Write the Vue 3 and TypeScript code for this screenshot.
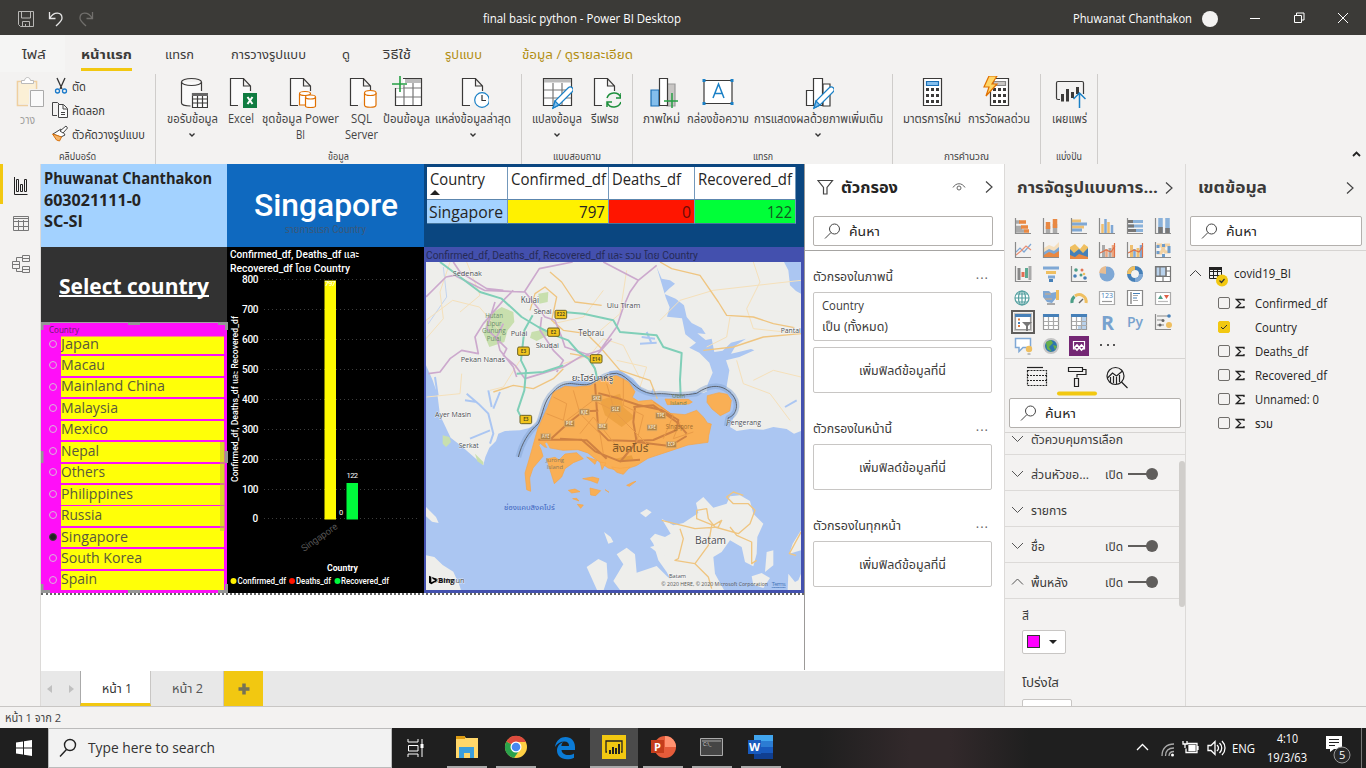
<script setup lang="ts">
import { h } from 'vue'

interface LabelProps { t: string; w: number; s?: number; b?: number; g?: number; f?: string }

const stack = '"Open Sans","Noto Sans","Noto Sans Thai","Liberation Sans",sans-serif'
const narrow = 'Roboto,"Noto Sans","Noto Sans Thai",sans-serif'

// Single line label whose advance width is fixed to w pixels.
const Tx = (p: LabelProps) => {
  const s = Number(p.s ?? 12)
  return h('svg', {
    width: p.w, height: s * 1.4,
    style: { display: 'block', flex: 'none', overflow: 'visible', marginLeft: (p.g ?? 0) + 'px' },
  }, [h('text', {
    x: 0, y: s * 1.06, textLength: p.w, lengthAdjust: 'spacingAndGlyphs', fill: 'currentColor',
    'font-size': s, 'font-weight': p.b ?? 400, 'font-family': p.f ?? stack,
  }, p.t)])
}
Tx.props = ['t', 'w', 's', 'b', 'g', 'f']

const tabs = [
  { t: 'ไฟล์', w: 24, g: 22 }, { t: 'หน้าแรก', w: 51, g: 35, on: true }, { t: 'แทรก', w: 29, g: 33 },
  { t: 'การวางรูปแบบ', w: 75, g: 37 }, { t: 'ดู', w: 8, g: 36 }, { t: 'วิธีใช้', w: 28, g: 33 },
  { t: 'รูปแบบ', w: 37, g: 34, gold: true }, { t: 'ข้อมูล / ดูรายละเอียด', w: 111, g: 40, gold: true },
]

interface Btn { icon: string; w: number; l: [string, number][]; drop?: boolean }
const groups: { w: number; pad: number; label: string; lw: number; items: Btn[] }[] = [
  { w: 366, pad: 6, label: 'ข้อมูล', lw: 21, items: [
    { icon: 'db', w: 60, l: [['ขอรับข้อมูล', 51]], drop: true },
    { icon: 'excel', w: 38, l: [['Excel', 26]] },
    { icon: 'dataset', w: 81, l: [['ชุดข้อมูล Power', 77], ['BI', 9]] },
    { icon: 'sql', w: 40, l: [['SQL', 21], ['Server', 33]] },
    { icon: 'enter', w: 51, l: [['ป้อนข้อมูล', 47]] },
    { icon: 'recent', w: 82, l: [['แหล่งข้อมูลล่าสุด', 76]], drop: true },
  ] },
  { w: 111, pad: 7, label: 'แบบสอบถาม', lw: 48, items: [
    { icon: 'transform', w: 56, l: [['แปลงข้อมูล', 50]], drop: true },
    { icon: 'refresh', w: 39, l: [['รีเฟรช', 28]] },
  ] },
  { w: 260, pad: 8, label: 'แทรก', lw: 20, items: [
    { icon: 'visual', w: 41, l: [['ภาพใหม่', 37]] },
    { icon: 'textbox', w: 71, l: [['กล่องข้อความ', 62]] },
    { icon: 'more', w: 130, l: [['การแสดงผลด้วยภาพเพิ่มเติม', 129]], drop: true },
  ] },
  { w: 148, pad: 8, label: 'การคำนวณ', lw: 45, items: [
    { icon: 'calc', w: 62, l: [['มาตรการใหม่', 58]] },
    { icon: 'quick', w: 71, l: [['การวัดผลด่วน', 62]] },
  ] },
  { w: 57, pad: 7, label: 'แบ่งปัน', lw: 26, items: [{ icon: 'publish', w: 43, l: [['เผยแพร่', 35]] }] },
]

const countries: [string, number][] = [
  ['Japan', 38], ['Macau', 44], ['Mainland China', 104], ['Malaysia', 57], ['Mexico', 47], ['Nepal', 38],
  ['Others', 44], ['Philippines', 72], ['Russia', 41], ['Singapore', 67], ['South Korea', 81], ['Spain', 36],
]
const ticks = [800, 700, 600, 500, 400, 300, 200, 100, 0]
const columns = [
  { t: 'Country', w: 55, v: 'Singapore', vw: 74 }, { t: 'Confirmed_df', w: 95, v: '797', vw: 26 },
  { t: 'Deaths_df', w: 69, v: '0', vw: 9 }, { t: 'Recovered_df', w: 94, v: '122', vw: 25 },
]
const filters = [
  { t: 'ตัวกรองในภาพนี้', w: 80, card: true }, { t: 'ตัวกรองในหน้านี้', w: 79, card: false },
  { t: 'ตัวกรองในทุกหน้า', w: 88, card: false },
]
const vizIcons = [
  'hbarStack', 'vbarStack', 'hbar', 'vbar', 'hbar100', 'vbar100',
  'line', 'area', 'areaStack', 'combo', 'combo2', 'ribbon',
  'waterfall', 'funnel', 'scatter', 'pie', 'donut', 'treemap',
  'globe', 'filled', 'gauge', 'card', 'multi', 'kpi',
  'slicer', 'table', 'matrix', 'R', 'Py', 'influence',
  'qa', 'arcgis', 'apps', 'dots',
]
const sections: { t: string; w: number; on: boolean; up?: boolean }[] = [
  { t: 'ส่วนหัวขอ...', w: 58, on: true }, { t: 'รายการ', w: 36, on: false },
  { t: 'ชื่อ', w: 14, on: true }, { t: 'พื้นหลัง', w: 37, on: true, up: true },
]
const fields: { t: string; w: number; on?: boolean }[] = [
  { t: 'Confirmed_df', w: 72 }, { t: 'Country', w: 42, on: true }, { t: 'Deaths_df', w: 53 },
  { t: 'Recovered_df', w: 72 }, { t: 'Unnamed: 0', w: 64 }, { t: 'รวม', w: 18 },
]
const places: { t: string; x: number; y: number; w: number; s: number; c?: string }[] = [
  { t: 'Sedenak', x: 98, y: 347, w: 88, s: 22 }, { t: 'Kulai', x: 302, y: 429, w: 55, s: 26 },
  { t: 'Senai', x: 341, y: 462, w: 54, s: 22 }, { t: 'Ulu Tiram', x: 560, y: 443, w: 101, s: 22 },
  { t: 'Hutan', x: 196, y: 474, w: 53, s: 19, c: '#6b8c6b' }, { t: 'Lipur', x: 200, y: 496, w: 45, s: 19, c: '#6b8c6b' },
  { t: 'Gunung', x: 186, y: 519, w: 71, s: 19, c: '#6b8c6b' }, { t: 'Pulai', x: 200, y: 541, w: 43, s: 19, c: '#6b8c6b' },
  { t: 'Pulai', x: 272, y: 527, w: 50, s: 22 }, { t: 'Tebrau', x: 475, y: 526, w: 77, s: 25 },
  { t: 'Skudai', x: 347, y: 562, w: 70, s: 22 }, { t: 'Pantai', x: 1082, y: 519, w: 60, s: 20 },
  { t: 'Pekan Nanas', x: 122, y: 605, w: 133, s: 22 }, { t: 'ยะโฮร์บาห์รู', x: 455, y: 662, w: 125, s: 24 },
  { t: 'Ayer Masin', x: 45, y: 770, w: 108, s: 22 }, { t: 'Serkat', x: 116, y: 863, w: 60, s: 22 },
  { t: 'Ubin', x: 756, y: 713, w: 40, s: 18, c: '#71824d' }, { t: 'Island', x: 750, y: 733, w: 50, s: 18, c: '#71824d' },
  { t: 'Pengerang', x: 920, y: 793, w: 103, s: 22 }, { t: 'Singapore', x: 737, y: 807, w: 82, s: 19, c: '#a36e30' },
  { t: 'สิงคโปร์', x: 577, y: 876, w: 108, s: 31, c: '#7b5528' },
  { t: 'Jurong', x: 378, y: 906, w: 54, s: 18, c: '#8e7a5a' }, { t: 'Island', x: 380, y: 926, w: 49, s: 18, c: '#8e7a5a' },
  { t: 'ช่องแคบสิงคโปร์', x: 252, y: 1050, w: 152, s: 22, c: '#3d63bd' },
  { t: 'Batam', x: 825, y: 1152, w: 93, s: 34 }, { t: 'Batam', x: 747, y: 1252, w: 51, s: 17 },
  { t: 'Karimun', x: 44, y: 1267, w: 90, s: 24 },
]
const shields: { t: string; x: number; y: number }[] = [
  { t: 'E22', x: 422, y: 462 }, { t: 'E2', x: 400, y: 515 }, { t: 'E3', x: 310, y: 572 }, { t: 'E14', x: 528, y: 595 },
  { t: 'E3', x: 317, y: 777 },
]
const roads: { t: string; x: number; y: number }[] = [
  { t: 'SKE', x: 530, y: 713 }, { t: 'KJE', x: 493, y: 755 }, { t: 'SLE', x: 587, y: 746 }, { t: 'PIE', x: 448, y: 790 },
  { t: 'BKE', x: 547, y: 799 }, { t: 'AYE', x: 377, y: 829 }, { t: 'TPE', x: 722, y: 766 }, { t: 'KPE', x: 696, y: 802 },
  { t: 'ECP', x: 754, y: 853 },
]
</script>

<template>
  <div class="app">
    <header class="title">
      <svg class="tools" width="100" height="35" fill="none">
        <g stroke="#b8b7b5"><path d="M18.500 10.500h15v15h-13l-2-2zM21.500 11v6h9v-6M22.500 25.500v-5h7v5M25.500 23v2" /></g>
        <path d="M49.500 11v6.500h6M50 17c4-7 12-6 12 0 0 3-3 5-6 8" stroke="#e6e6e6" stroke-width="1.300" />
        <path d="M92.500 11v6.500h-6M92 17c-4-7-12-6-12 0 0 3 3 5 6 8" stroke="#716f6c" stroke-width="1.300" />
      </svg>
      <Tx t="final basic python - Power BI Desktop" :w="198" :g="383" />
      <Tx t="Phuwanat Chanthakon" :w="119" :g="392" />
      <i class="avatar" />
      <svg width="148" height="35" fill="none" stroke="#fff"><path d="M32 17.500h10M76.500 14.500h7v7h-7zM78.500 14v-2h7.500v7h-2M120 12l10 10M130 12l-10 10" /></svg>
    </header>

    <nav class="tabs">
      <div v-for="t in tabs" :key="t.t" class="tab" :class="{ on: t.on, gold: t.gold }">
        <Tx :t="t.t" :w="t.w" :s="13" :b="t.on ? 700 : 400" :g="t.g" />
        <i v-if="t.on" class="bar" />
      </div>
    </nav>

    <section class="ribbon">
      <div class="group clip">
        <div class="clipbody">
          <div class="paste">
            <svg width="32" height="33" fill="none"><path d="M4 7h16v6h-6v15H4z" fill="#fbf0d6" /><path d="M9 5.500H2.500v24H13" stroke="#efcf9f" stroke-width="1.600" /><path d="M19 5.500h2.500V13" stroke="#efcf9f" stroke-width="1.600" /><path d="M6.500 7.500v-3h3c.5-4 5.500-4 6 0h3v3z" fill="#fff" stroke="#bbb" /><path d="M15.500 14.500h13v16h-13z" fill="#fafafa" stroke="#aaa" /></svg>
            <Tx t="วาง" :w="15" />
          </div>
          <div class="cmds">
            <div class="cmd">
              <svg width="18" height="18" fill="none"><path d="M5 1l5 11M13 1L8 12" stroke="#333" stroke-width="1.300" /><circle cx="5.500" cy="14" r="2" stroke="#1979ca" stroke-width="1.300" /><circle cx="12.500" cy="14" r="2" stroke="#1979ca" stroke-width="1.300" /></svg>
              <Tx t="ตัด" :w="14" :g="2" />
            </div>
            <div class="cmd">
              <svg width="18" height="18" fill="#fafafa" stroke="#444"><path d="M5 14.500H.5v-13h5l2 2" fill="none" /><path d="M6.500 3.500h5l4 4v9h-9zM11 4v4h4M9 11.500h4M9 13.500h4" /></svg>
              <Tx t="คัดลอก" :w="33" :g="2" />
            </div>
            <div class="cmd">
              <svg width="18" height="18" fill="none"><path d="M1 9l8-5 4 6-4 2z" fill="#fff" stroke="#444" /><path d="M.5 9l9 3-2 4-3-1z" fill="#f6b56a" stroke="#d9730d" /><path d="M8 6l6-5 1.500 2L11 8z" fill="#fff" stroke="#444" /></svg>
              <Tx t="ตัวคัดวางรูปแบบ" :w="73" :g="2" />
            </div>
          </div>
        </div>
        <div class="glabel"><Tx t="คลิปบอร์ด" :w="37" :s="10.500" /></div>
      </div>
      <div v-for="g in groups" :key="g.label" class="group" :style="{ width: g.w + 'px' }">
        <div class="btns" :style="{ paddingLeft: g.pad + 'px' }">
          <div v-for="b in g.items" :key="b.icon" class="btn" :style="{ width: b.w + 'px' }">
            <svg width="32" height="34" fill="none" stroke="#3b3a39" stroke-width="1.200">
              <template v-if="['excel', 'dataset', 'sql', 'recent', 'refresh'].includes(b.icon)">
                <path d="M13 29.500H5.500v-27h13l7 7.500V15M18.500 2.500V10h7" fill="#fafafa" />
              </template>
              <g v-if="b.icon === 'db'"><path d="M5.500 6h20v10h-9v13c-5 1-11 0-11-2z" fill="#fafafa" stroke="none" /><path d="M5.500 6v21c0 2 5 3 9 3M25.500 6v9" /><ellipse cx="15.500" cy="6" rx="10" ry="3.500" /><path d="M16.500 17.500h15v14h-15zM16.500 23h15M16.500 27h15M21.500 20v11M26.500 20v11" fill="#fff" /><path d="M16 17h16v3H16z" fill="#666" stroke="none" /></g>
              <g v-if="b.icon === 'excel'"><path d="M18 17h14v15H18z" fill="#107c41" stroke="none" /><path d="M22.500 21l5 7M27.500 21l-5 7" stroke="#fff" stroke-width="2" /></g>
              <g v-if="b.icon === 'dataset'" stroke="#e07000" fill="#fff"><path d="M14.500 18v11h8V18" /><ellipse cx="20" cy="17.500" rx="5.500" ry="2" /><path d="M20.500 21v9c0 2 10 2 10 0v-9" /><ellipse cx="25.500" cy="21" rx="5" ry="2" /></g>
              <g v-if="b.icon === 'sql'" stroke="#e07000" fill="#fff"><path d="M19.500 17v12c0 3 11.500 3 11.500 0V17" /><ellipse cx="25.300" cy="17" rx="5.800" ry="2.500" /></g>
              <g v-if="b.icon === 'enter'"><path d="M4.500 2.500h26v27h-26z" fill="#fff" /><path d="M14 3h16v4H14z" fill="#bbb" stroke="none" /><path d="M5 12h25M5 21h25M13 9v20M22 7v22" stroke="#777" /><path d="M1 1h11v11H1z" fill="#f3f2f1" stroke="none" /><path d="M9 0v16M1 8h15" stroke="#26a044" stroke-width="1.600" /></g>
              <g v-if="b.icon === 'recent'" stroke="#1a80c6"><circle cx="25" cy="24" r="7.300" fill="#fff" /><path d="M25 19v5.500h4" stroke="#333" /></g>
              <g v-if="b.icon === 'transform'"><path d="M2.500 2.500h28v27h-28z" fill="#fff" /><path d="M3 3h27v3.500H3z" fill="#bbb" stroke="none" /><path d="M3 14h27M3 22h27M12 7v22M21 7v22" stroke="#777" /></g>
              <g v-if="b.icon === 'refresh'" stroke="#1d8f3c" stroke-width="1.500"><circle cx="25" cy="24" r="8" fill="#f3f2f1" stroke="none" /><path d="M18 22c2-6 11-7 13.500-1M32 17v5h-5M32 26c-2 6-11 7-13.500 1M18 31v-5h5" /></g>
              <g v-if="b.icon === 'visual'"><path d="M5 14h8v16H5z" fill="#83beec" stroke="#1a6fb5" /><path d="M21 8h8v22h-8z" fill="#c8c6c4" stroke="#999" /><path d="M13.500 2.500h8v27h-8z" fill="#fff" /><path d="M26 17v15M18 25h15" stroke="#26a044" stroke-width="1.500" /></g>
              <g v-if="b.icon === 'textbox'"><path d="M2 4.500h28v23H2z" fill="#fff" /><path d="M11 22l5.500-14L22 22M13 17.500h7" stroke="#1a80c6" stroke-width="1.500" /><g fill="#1a80c6" stroke="none"><path d="M.5 3h3v3h-3zM28.500 3h3v3h-3zM.5 26h3v3h-3zM28.500 26h3v3h-3z" /></g></g>
              <g v-if="b.icon === 'more'" fill="#fff"><path d="M4.500 14.500h7v15h-7zM21 8h7v22h-7zM11.500 2.500h9v27h-9z" /></g>
              <g v-if="b.icon === 'transform' || b.icon === 'more'" stroke="#1a80c6"><path d="M12 32l2-7 13-13c3-3 7 1 4 4L18 29z" fill="#fff" /><path d="M12 32l2-7 4 4z" fill="#83beec" /></g>
              <g v-if="b.icon === 'calc' || b.icon === 'quick'"><path d="M7.500 2.500h18v27h-18z" fill="#fff" /><path d="M10.500 5.500h12v4h-12z" :fill="b.icon === 'calc' ? '#83beec' : '#c8c6c4'" :stroke="b.icon === 'calc' ? '#1a6fb5' : '#888'" /><path d="M10 13.500h13M10 19.500h13M10 25.500h13" stroke-width="3" stroke-dasharray="3 2" /></g>
              <path v-if="b.icon === 'quick'" d="M6 0h8L9 8h5L3 20l3-9H1z" fill="#ffd667" stroke="#e07000" />
              <g v-if="b.icon === 'publish'"><path d="M6 23.500H4c-1 0-1.500-.5-1.500-1.500V7c0-1 .5-1.500 1.500-1.500h24c1 0 1.500.5 1.500 1.500v11" /><path d="M8.500 18v7.500M13.500 13v12.500M18.500 16v6M23.500 11v7" stroke-width="3" /><path d="M25.500 32V17M19.500 23l6-6 6 6" stroke="#1a80c6" stroke-width="1.500" /></g>
            </svg>
            <div v-for="l in b.l" :key="l[0]" class="line"><Tx :t="l[0]" :w="l[1]" :s="12" /></div>
            <svg v-if="b.drop" class="drop" width="8" height="16" fill="none" stroke="#333" stroke-width="1.400"><path d="M1.500 7.500L4 10l2.500-2.500" /></svg>
          </div>
        </div>
        <div class="glabel"><Tx :t="g.label" :w="g.lw" :s="10.500" /></div>
      </div>
      <svg class="collapse" width="12" height="10" fill="none" stroke="#222" stroke-width="1.800"><path d="M2 7l3.500-3.500L9 7" /></svg>
    </section>

    <main class="work">
      <aside class="side">
        <i class="mark" />
        <svg width="40" height="130" fill="none">
          <path d="M14.500 13v17.500h13M16.500 15.500h2v12h-2zM20.500 20.500h2v7h-2zM24.500 15.500h2v12h-2z" stroke="#222" />
          <path d="M13.500 52.500h15v14h-15zM13.500 57.500h15M13.500 62.500h15M18.500 56v10M23.500 56v10M14 54.500h14" stroke="#777" />
          <path d="M22.500 91.500h7v6h-7zM22.500 102.500h7v6h-7zM12.500 97.500h7v7h-7zM12.500 100.500h7M22.500 94.500h7M22.500 105.500h7M16.500 97v-3.500h6M16.500 105v2.500h6" stroke="#777" />
        </svg>
      </aside>

      <div class="center">
        <div class="top">
          <div class="canvas">
            <div class="report">
              <div class="c1">
                <div class="who">
                  <Tx t="Phuwanat Chanthakon" :w="168" :s="15.500" :b="700" />
                  <Tx t="603021111-0" :w="97" :s="15.500" :b="700" />
                  <Tx t="SC-SI" :w="39" :s="15.500" :b="700" />
                </div>
                <div class="select"><Tx t="Select country" :w="150" :s="21" :b="700" /><i class="uline" /></div>
                <div class="slicer">
                  <div class="shead"><Tx t="Country" :w="30" :s="8.500" /></div>
                  <div class="rows">
                    <div v-for="c in countries" :key="c[0]" class="srow">
                      <i class="radio" :class="{ on: c[0] === 'Singapore' }" />
                      <div class="cell"><Tx :t="c[0]" :w="c[1]" :s="14.500" /></div>
                    </div>
                  </div>
                  <i class="thumb" />
                  <svg class="handles" width="187" height="271" fill="none"><path d="M0 .5h187" stroke="#a3a3a3" /><path d="M1 8V1.500h8M87 1.500h12M177 1.500h8.500V8M1 129v12M185.500 129v12M1 262v7.500h8M87 269.500h12M177 269.500h8.500V262" stroke="#969696" stroke-width="3" /></svg>
                </div>
              </div>
              <div class="c2">
                <div class="big">
                  <Tx t="Singapore" :w="144" :s="32" :b="500" :f="narrow" />
                  <Tx class="sub" t="รายการแรก Country" :w="81" :s="10" :f="narrow" />
                </div>
                <svg class="chart" width="197" height="346" viewBox="227 247 197 346">
                  <g fill="#fff" font-size="10.500" font-weight="500">
                    <text x="230" y="258" textLength="129" lengthAdjust="spacingAndGlyphs">Confirmed_df, Deaths_df และ</text>
                    <text x="230" y="272" textLength="120" lengthAdjust="spacingAndGlyphs">Recovered_df โดย Country</text>
                  </g>
                  <g v-for="(v, i) in ticks" :key="v">
                    <text :x="v ? 242 : 252.500" :y="283 + i * 29.930" fill="#fff" font-size="10" font-weight="500" :textLength="v ? 16.500 : 5.500">{{ v }}</text>
                    <path :d="`M264 ${Math.round(279 + i * 29.930) + 0.5}H420`" stroke="#3c3c3c" stroke-dasharray="1 3" />
                  </g>
                  <path d="M324.500 280.500h11.500v239h-11.500z" fill="#fffa00" /><path d="M346.500 483h11.500v36.500h-11.500z" fill="#00fa3c" />
                  <g fill="#fff" font-size="7.500">
                    <text x="324.800" y="286" textLength="11">797</text><text x="339" y="515" textLength="4.500">0</text><text x="346.500" y="478" textLength="11.500">122</text>
                  </g>
                  <text transform="translate(238,482) rotate(-90)" fill="#fff" font-size="9.500" font-weight="500" textLength="166" lengthAdjust="spacingAndGlyphs">Confirmed_df, Deaths_df และ Recovered_df</text>
                  <text transform="translate(304,552) rotate(-35)" fill="#555" font-size="9.500" textLength="42">Singapore</text>
                  <text x="327" y="571" fill="#fff" font-size="9" font-weight="700" textLength="31" lengthAdjust="spacingAndGlyphs">Country</text>
                  <circle cx="233.500" cy="581" r="3" fill="#fff100" /><circle cx="292" cy="581" r="3" fill="#ff1500" /><circle cx="337.500" cy="581" r="3" fill="#00fa3c" />
                  <g fill="#fff" font-size="9" font-weight="500"><text x="237.500" y="584" textLength="48.500" lengthAdjust="spacingAndGlyphs">Confirmed_df</text><text x="296" y="584" textLength="35" lengthAdjust="spacingAndGlyphs">Deaths_df</text><text x="341" y="584" textLength="48" lengthAdjust="spacingAndGlyphs">Recovered_df</text></g>
                </svg>
              </div>
              <div class="c3">
                <div class="tablebox">
                  <div class="grid">
                    <div v-for="c in columns" :key="c.t" class="col">
                      <div class="th"><Tx :t="c.t" :w="c.w" :s="15.500" /><i v-if="c.t === 'Country'" class="sort" /></div>
                      <div class="td"><Tx :t="c.v" :w="c.vw" :s="16" /></div>
                    </div>
                  </div>
                </div>
                <div class="mapbox">
                  <Tx class="mtitle" t="Confirmed_df, Deaths_df, Recovered_df และ รวม โดย Country" :w="272" :s="10" :f="narrow" />
                  <svg class="map" width="375" height="328" viewBox="18 305 1125 984" preserveAspectRatio="none" fill="none" stroke-linejoin="round">
                    <path d="M18 305h1125v984H18z" fill="#abc6f2" />
                    <g fill="#eeeeeb">
                      <path d="M18 305H1092L1105 330 1110 375 1128 392 1143 400V812L1122 820 1100 806 1060 800 1030 808 990 806 950 812 930 800 945 760 950 720 930 690 890 680 850 698 825 694 800 705 730 700 695 702 665 685 640 655 600 630 570 632 545 655 520 670 490 660 455 662 420 680 395 705 370 750 345 795 325 804 300 810 255 812 235 820 228 842 208 862 196 890 190 915 165 893 125 858 92 832 60 765 52 700 38 660 18 615z" />
                      <path d="M725 1075L760 1095 790 1088 835 1058 828 1028 850 1010 880 1042 920 1030 930 1008 960 1005 990 1022 1000 1060 1030 1090 1012 1130 1010 1180 1000 1218 975 1205 965 1160 930 1140 905 1175 880 1190 885 1240 912 1289H770L740 1235 715 1200 700 1150 690 1135 705 1120 735 1130 752 1120z" />
                      <path d="M18 1040l30 30 8 18-20-4-18-16zM18 1185l25 5 25 24 32 20 18 40 5 15H18zM500 1220l35-24 25 12 3 45-12 36h-20zM580 1262l30-50-20-30 30-20 25 20 5 55 60-20 30 30 50 42H600zM552 1115l20 15 8 15-15 5zM660 1058l20-12 15 10-18 15zM1040 1175l20-5v45l-25 20zM1143 1110l-25 40-10 30 35-10zM1105 1240l20 25 10-5 8-20v49h-40zM690 1160l20-5 15 10 10 25-25-15z" />
                      <path d="M995 1248l30-10 25 15-20 30-30-10z" />
                    </g>
                    <g fill="#c8dfae"><path d="M205 465l40-25 35 15 3 30-20 25-10 35-45 15-17-40z" /><path d="M335 515l40-8 15 15-40 20-20-10zM355 400l30-5-2 30-25 5zM68 825l20 5 5 15-15 15-10-10zM165 880l25 25v10l-18-12z" /></g>
                    <path d="M710 320l15 35 25 5 15 10-18 15-15 15 35 15 25 20 8 35 15 18 30 15 12 18-25-2 25 20 18-4 8 40 25-4 25-24 45-12-30 20-15 25 20-4 40-10 10 4-45 20-40 10 10 30-10 60-40 35-20-3 5-50 15-35-10-30-30-30-30-15 20-15-32-25-10-48-45-5 8-28-12-30z" fill="#abc6f2" />
                    <g stroke="#abc6f2" stroke-width="6"><path d="M665 530l40 5M680 515l15 35M660 550l50-3M45 650l8 55M140 700l35 30 30 30 15 60-10 30M205 690l10 50M240 695l-20 50M170 725l-35-5M690 720l10-35M210 810l-60 25M1130 720l-35 20" /><path d="M70 320l10 90-55 80" stroke-width="2" /></g>
                    <g stroke="#f5e0ba" stroke-width="3">
                      <path d="M18 480l80-60 80 20 60 70M90 305l-30 90 10 80-52 60M140 305l40 100-60 50M300 600l-50 80-40 10M720 480l60-60 100-30 263-30M930 470l-10 60-60 30M1000 305l20 60-40 80 20 60 143 15M430 610l80-25 40-50 60 20 50 100M950 600l20 70 80 30 60 80M1000 660l60-30 83 20M550 390l-60 80-90 20M620 330l-20 130-70 60M20 710l100-10 5-60M590 600l90 20-20 60" />
                    </g>
                    <g stroke="#efc581" stroke-width="4">
                      <path d="M330 450l15-50 30-20 35 30-15 70 35 30 70 10 40 40 60 70 90 30 22 55M390 335l35 30 40 60 80 10M720 305l35 20 85 20 55 80 25 40 80 5 60 20 63 12M850 570l90-10 90-30 113-10M450 580l60 10 20 50M220 695l60-20 60 10 60-30 30-30" />
                      <path d="M725 1080l100 25 70-5 10-20-25 15-50-20v-25l30-5 5 30 20 25 70 20 35-30 15-40-20-20h-45l-20-20 20-15 30 10M930 1100l20 25 45 20v65l15-10M780 1105l10 30-15 60-10 5 60 10 40-55 10-60M825 1210l40 40 10 35M1143 1115l-35 65 20 5" />
                    </g>
                    <g stroke="#cca9cd" stroke-width="5">
                      <path d="M18 410l60-60 25-5 90 45 120 5 45-70 100-20M100 305l20 30 80 50 50 5M550 305l105 55 55-45M655 360l-25 35-20 45-20 60-50 70-60 20-50 30-65 20-50 15-30-40-35-30 10-20-60-60 25-80M280 390l-30 30-60 70-25 40 10 50-50-10-35 25-30 40-35 5M250 490l-20 40 10 40 40 50 10 30M315 395l60 75 30 10 20 50 10 30 90 30 50-55M365 470l-5 40 40 60 30 30-20 35" />
                    </g>
                    <g stroke="#80cfb8" stroke-width="6"><path d="M60 305l120 90 65 20 60 55 50 30 50 25 40 15 30 35 30 20 20 30 10 45M338 465l-25 45-10 90 15 30-5 60-20 60 15 30M430 455l60 5 90 20 20 35 110 10 20 35 55 18-5 80 2 50M290 640l80-5 60-20" /></g>
                    <path d="M295 890c10-40 30-75 60-100 15-30 15-70 45-95 35-40 60-20 100-22 30-5 50-35 90-34 40 8 50 55 110 62 50-5 60 10 130-2 40-28 80-30 110 8 20 30 5 60-15 65l-5 25" stroke="#86a6d4" stroke-width="17" opacity=".5" />
                    <g fill="#f9af55" stroke="#f7a544" stroke-width="2">
                      <path d="M353 806l30-65 17-45 35-18 30 2 45-4 25-15 30-12 25-3 35 18 20 30-8 17 18 12 40-4 35 24 20 16 45 4 35-13 22 22 10 16 12 3-8 35-2 20-60 8-60 20-60 20-35 22-15 5-30 12-40-10-35-25-25-20-30-10-45 2-55-10-17-14 12 42-30 35-10 30 3 40-12-5-5-50 12-40z" />
                      <path d="M862 706l35-9 25 5 12 18-5 32-28 14-25-20-15-20zM735 716l70 1 12 8-10 6-65 2zM380 896l25-5 12 8 18-18 35-4 20 18-30 12-25 18-10 25-22 20z" />
                      <path d="M500 890l30 10-5 12zM540 905l18 3-12 20zM575 920l25 4 30-4-20 22-20-6zM488 955l30-5 19 5-5 14-20-8zM510 983l32 8-15 15-15-2zM445 990l20-4 15 8-25 4zM458 1015l12-1 7 8zM472 1032l18 2-8 10zM555 988l12 8zM620 975l20-10 8-2-20 15z" />
                    </g>
                    <path d="M360 853l8 14M378 848l10 20" stroke="#abc6f2" stroke-width="6" />
                    <g fill="#eba040"><path d="M540 720l60-20 10 40 35 30-40 30-50-35z" opacity=".8" /><path d="M585 895l50-10 5 12-40 5z" /></g>
                    <g stroke="#cf8142" stroke-width="6"><path d="M355 838h130l40 35 75 30 60-5M390 838l55-50 45-35 45-2M525 670l10 140 30 30 75 2 60-3 70-30 5-30-50-30-70-15-60-20-60-15M600 905l50-60-10-60 5-45M650 845l100 12 50-30M640 740l60-5 70 50 30 35M420 835l80 5 60 55" /></g>
                    <g stroke="#e99b47" stroke-width="3"><path d="M380 760l50 20 10-50-40-20M460 690l20 70 60 60 10 60M440 780l80-60 60 30 100 100M560 670l20 70-30 60M610 655v80l60 30-20 80M700 725l60 40-30 70M780 785l-20 50 60-20M480 820l40-50 80 100" /></g>
                    <path d="M295 890c10-40 30-75 60-100 15-30 15-70 45-95 35-40 60-20 100-22 30-5 50-35 90-34 40 8 50 55 110 62 50-5 60 10 130-2 40-28 80-30 110 8 20 30 5 60-15 65l-5 25" stroke="#5c6470" stroke-width="3" />
                    <g v-for="r in roads" :key="r.t"><path :d="`M${r.x - 15} ${r.y - 9}h30v18h-30z`" fill="#b08347" stroke="#dfae6a" stroke-width="2" /><text :x="r.x - 11" :y="r.y + 5" fill="#f3dfbb" font-size="13" font-weight="700" textLength="22" lengthAdjust="spacingAndGlyphs">{{ r.t }}</text></g>
                    <g v-for="(s, i) in shields" :key="i"><rect :x="s.x - 17" :y="s.y - 12" width="35" height="25" rx="4" fill="#f2c51d" stroke="#6a6125" stroke-width="3" /><text :x="s.x + 0.5" :y="s.y + 6" text-anchor="middle" fill="#5b521d" font-size="14" font-weight="700">{{ s.t }}</text></g>
                    <g v-for="(p, i) in places" :key="i" :fill="p.c ?? '#4a4d52'"><text :x="p.x" :y="p.y" :font-size="p.s" :textLength="p.w" lengthAdjust="spacingAndGlyphs" :stroke="p.c ? 'none' : '#fff'" stroke-width="3" stroke-opacity=".7" paint-order="stroke">{{ p.t }}</text></g>
                    <path d="M27 1246l7 3v17l12-6-8-4-2-6 14 5v8l-16 9-7-5z" fill="#000" />
                    <text x="55" y="1267" font-size="22" font-weight="700" fill="#111" textLength="48">Bing</text>
                    <text x="724" y="1278" font-size="17" fill="#555" textLength="320" lengthAdjust="spacingAndGlyphs">© 2020 HERE, © 2020 Microsoft Corporation</text>
                    <text x="1055" y="1278" font-size="17" fill="#4676b8" textLength="42" text-decoration="underline">Terms</text>
                  </svg>
                </div>
              </div>
            </div>
          </div>

          <aside class="filters">
            <div class="fhead">
              <svg width="17" height="17" fill="none" stroke="#444" stroke-width="1.200"><path d="M1 1.500h14.500l-5.500 7v6.500H6.500V8.500z" /></svg>
              <Tx t="ตัวกรอง" :w="57" :s="15" :b="700" :g="7" />
              <svg class="eye" width="14" height="10" fill="none" stroke="#666"><path d="M1 5.500c3-5 9-5 12 0" /><circle cx="7" cy="6" r="2" /></svg>
              <svg class="chev" width="9" height="14" fill="none" stroke="#444" stroke-width="1.200"><path d="M2 1.500l6 5.500-6 5.500" /></svg>
            </div>
            <div class="search"><svg width="17" height="17" fill="none" stroke="#444"><circle cx="10.500" cy="6" r="5" /><path d="M7 9.500l-6 6" /></svg><Tx t="ค้นหา" :w="31" /></div>
            <div class="flist">
              <section v-for="f in filters" :key="f.t">
                <div class="fsec"><Tx :t="f.t" :w="f.w" /><span>···</span></div>
                <div v-if="f.card" class="fcard"><Tx t="Country" :w="42" /><Tx t="เป็น (ทั้งหมด)" :w="66" /></div>
                <div class="drophere"><Tx t="เพิ่มฟิลด์ข้อมูลที่นี่" :w="87" /></div>
              </section>
            </div>
          </aside>
        </div>
        <footer class="pages">
          <div class="arrows"><i class="l" /><i class="r" /></div>
          <div class="page active"><Tx t="หน้า 1" :w="30" /></div>
          <div class="page"><Tx t="หน้า 2" :w="31" /></div>
          <div class="add"><svg width="12" height="12" stroke="#767255" stroke-width="3.500"><path d="M6 .5v11M.5 6h11" /></svg></div>
        </footer>
      </div>

      <aside class="viz">
        <div class="phead"><Tx t="การจัดรูปแบบการ..." :w="141" :s="15" :b="700" :g="12" /><svg class="pchev" width="9" height="14" fill="none" stroke="#444" stroke-width="1.200"><path d="M1 1.500l6 5.500-6 5.500" /></svg></div>
        <div class="icons">
          <div v-for="v in vizIcons" :key="v" class="vi" :class="{ picked: v === 'slicer' }">
            <svg width="18" height="18" fill="none" stroke-width="1.200">
              <g v-if="v === 'hbarStack'"><path d="M2 5h4M2 10.500h6M2 14h8" stroke="#aaa" stroke-width="3.500" /><path d="M5 5h7M7 10h7M10 14h5" stroke="#e98842" stroke-width="3.500" /></g>
              <g v-if="v === 'vbarStack'"><path d="M6 9v7M13 7v9" stroke="#aaa" stroke-width="4.500" /><path d="M6 5v7M13 2v9" stroke="#e98842" stroke-width="4.500" /></g>
              <g v-if="v === 'hbar'"><path d="M2 4h9M2 10h12" stroke="#efbf70" stroke-width="3" /><path d="M2 7h15M2 13h10" stroke="#7fa8d5" stroke-width="3" /></g>
              <g v-if="v === 'vbar'"><path d="M4.500 7v9M10.500 5v11" stroke="#efbf70" stroke-width="2.500" /><path d="M7.500 2v14M14 8v8" stroke="#7fa8d5" stroke-width="2.500" /></g>
              <g v-if="v === 'hbar100'"><path d="M2 4.500h15M2 9h15M2 13.500h15" stroke="#8bb2da" stroke-width="3" /><path d="M2 4.500h5M2 9h6M2 13.500h8" stroke="#777" stroke-width="3" /></g>
              <g v-if="v === 'vbar100'"><path d="M6.500 1v15M13.500 1v15" stroke="#8bb2da" stroke-width="4.500" /><path d="M6.500 10v6M13.500 11v5" stroke="#777" stroke-width="4.500" /></g>
              <g v-if="v === 'line'"><path d="M2 11l4-4 4 4 7-8" stroke="#7fa8d5" /><path d="M2 14l5-4 5-5 5 4" stroke="#e99075" /></g>
              <g v-if="v === 'area'"><path d="M2 7l5-3 5 2 5-5v15H2z" fill="#f5dfbd" /><path d="M2 11l5-3 5 2 5-4v10H2z" fill="#7fa8d5" /><path d="M2 14l5-3 5 2 5-3v6H2z" fill="#e98842" /></g>
              <g v-if="v === 'areaStack'"><path d="M0 6l5-3 5 5 4-5 4 3v12H0z" fill="#efbf60" /><path d="M0 8l4 4 5-4 4 4 5-5v10H0z" fill="#4680b8" /><path d="M0 14l5 2 4-3 9 3v2H0z" fill="#e98842" /></g>
              <g v-if="v.startsWith('combo')"><path d="M5.500 4v12M12 7v9" :stroke="v === 'combo' ? '#aaa' : '#efbf70'" stroke-width="3" /><path d="M8.500 8v8M15 4v12" :stroke="v === 'combo' ? '#eda77f' : '#7fa8d5'" stroke-width="2.500" /><path d="M2 12l6-3 5 2 4-6M16.500 2v14" stroke="#df7047" /></g>
              <g v-if="v === 'ribbon'"><path d="M3 4h4l4 7h5M3 12h4l4-8h5" stroke="#f1c583" stroke-width="3" opacity=".7" /><path d="M4 4v3M4 10v3M9.500 13v3M9.500 3v3M15 5v7" stroke="#6f9ccb" stroke-width="3" /></g>
              <g v-if="v === 'waterfall'"><path d="M5 3v12" stroke="#888" stroke-width="3" /><path d="M9 7v5" stroke="#e36c51" stroke-width="3" /><path d="M12.500 3v10" stroke="#5daa92" stroke-width="3" /><path d="M16 1v14" stroke="#aaa" stroke-width="3" /></g>
              <path v-if="['hbarStack', 'vbarStack', 'hbar', 'vbar', 'hbar100', 'vbar100', 'line', 'area', 'combo', 'combo2', 'ribbon', 'waterfall', 'scatter', 'influence'].includes(v)" d="M1.500 1v15.500H17" stroke="#8a8a8a" />
              <g v-if="v === 'funnel'" stroke-width="3"><path d="M1 3h16M6 12h7" stroke="#7fa8d5" /><path d="M4 7.500h10" stroke="#efbf60" /><path d="M7 15.500h4" stroke="#4680b8" /></g>
              <g v-if="v === 'scatter'"><circle cx="6" cy="5" r="1.800" fill="#4b9e86" /><circle cx="12" cy="5" r="1.500" fill="#e27556" /><circle cx="5" cy="11" r="1.800" fill="#4680b8" /><circle cx="11" cy="10" r="1.500" fill="#4b9e86" /><circle cx="15" cy="13" r="1.800" fill="#4680b8" /><circle cx="14" cy="9" r="1.300" fill="#efbf60" /></g>
              <g v-if="v === 'pie'"><circle cx="9" cy="9" r="7.500" fill="#7fa8d5" /><path d="M8 9V1a8 8 0 0 0-7 7z" fill="#e8bd92" /></g>
              <g v-if="v === 'donut'" stroke-width="4"><circle cx="9" cy="9" r="6" stroke="#4680b8" /><path d="M3 9a6 6 0 0 1 6-6" stroke="#efbf60" /><path d="M15 9a6 6 0 0 1-6 6" stroke="#7fa8d5" /></g>
              <g v-if="v === 'treemap'" stroke="#777"><path d="M1.500 1.500h15v15h-15z" fill="#fff" /><path d="M2 2h10v9H2z" fill="#b9d2ec" /><path d="M6 2v9M2 11.500h15M12 2v9M12 6h5M9 12v5" /></g>
              <g v-if="v === 'globe'" stroke="#55a0a0"><circle cx="8" cy="9" r="7" fill="#fff" /><path d="M1 9h14M8 2v14M2.500 5h11M2.500 13h11" /><ellipse cx="8" cy="9" rx="3.500" ry="7" /></g>
              <g v-if="v === 'filled'"><path d="M1 2h6l2 2 5-1v6l-4 5-5-1-4-5z" fill="#7fa8d5" /><path d="M14 1h3v10h-3z" fill="#efbf60" /><path d="M3 5h6M3 10h7M5 15h8" stroke="#aaa" stroke-width="2" /></g>
              <g v-if="v === 'gauge'" stroke-width="3"><path d="M2 14a7 7 0 0 1 2.500-6.500" stroke="#4b9e86" /><path d="M5 7a7 7 0 0 1 11 7" stroke="#efbf60" /><path d="M9 14l4-4" stroke="#666" stroke-width="1.500" /></g>
              <g v-if="v === 'card'"><path d="M1.500 2.500h15v13h-15z" fill="#fff" stroke="#aaa" /><text x="3" y="9" font-size="7" fill="#4680b8" textLength="12">123</text><path d="M4 12.500h10" stroke="#999" /></g>
              <g v-if="v === 'multi'"><path d="M1.500 1.500h15v15h-15z" fill="#fff" stroke="#888" /><path d="M5 3v12" stroke="#aaa" stroke-width="2" /><path d="M7 4.500h7M7 9h4" stroke="#4680b8" /><path d="M7 6.500h5M7 11.500h5" stroke="#aaa" /></g>
              <g v-if="v === 'kpi'"><path d="M1.500 3.500h15v12h-15z" fill="#fff" stroke="#aaa" /><path d="M4 10l2.500-4L9 10z" fill="#4b9e86" /><path d="M10 6h5l-2.500 4z" fill="#df6047" /><path d="M4 12.500h10" stroke="#bbb" /></g>
              <g v-if="v === 'slicer'"><path d="M1.500 1.500h15v15h-15z" fill="#fff" stroke="#999" /><path d="M1 2.500h16" stroke="#4680b8" stroke-width="3" /><path d="M4 6.500h2M4 13h2" stroke="#df7a3c" stroke-width="2" /><path d="M4 10h2" stroke="#4680b8" stroke-width="2" /><path d="M8 9h10l-4 4v5h-2v-5z" fill="#777" /></g>
              <g v-if="v === 'table' || v === 'matrix'"><path d="M1.500 1.500h15v15h-15z" fill="#fff" stroke="#999" /><path v-if="v === 'matrix'" d="M12 4h4v12h-8v-4h4z" fill="#b9d2ec" /><path d="M1 2.500h16" stroke="#4680b8" stroke-width="3" /><path d="M2 8.500h15M2 12.500h15M6.500 4v13M11.500 4v13" stroke="#aaa" /></g>
              <text v-if="v === 'R'" x="3" y="16.500" font-size="20" font-weight="700" fill="#78a2ce" textLength="13" lengthAdjust="spacingAndGlyphs">R</text>
              <text v-if="v === 'Py'" x="1" y="14" font-size="14" font-weight="600" fill="#78a2ce" textLength="16">Py</text>
              <g v-if="v === 'influence'"><path d="M3 3h12M3 7h6M3 12h7" stroke="#888" /><circle cx="15" cy="3" r="1.800" fill="#4680b8" /><circle cx="9" cy="7.500" r="1.500" fill="#666" /><circle cx="6" cy="12" r="1.500" fill="#666" /><circle cx="15" cy="12" r="3" fill="#efbf60" /></g>
              <g v-if="v === 'qa'"><path d="M1.500 1.500h15v9H9l-4 4v-4H1.500z" fill="#fff" stroke="#7fa8d5" stroke-width="1.500" /><circle cx="15" cy="12" r="3.200" fill="#efbf60" /><path d="M13.500 17h3" stroke="#999" /></g>
              <g v-if="v === 'arcgis'"><circle cx="9" cy="9" r="7" fill="#2d76ad" stroke="#c5c5c5" stroke-width="2" /><path d="M4 5l5-2 2 3-4 4 3 5-5-3zM11 8l4 1-2 4z" fill="#68b04a" /></g>
              <g v-if="v === 'apps'"><path d="M-1-1h20v20H-1z" fill="#742774" /><path d="M5 12H3.500V4.500h11V12H13" stroke="#fff" /><path d="M4.500 10.500L7 8l4.500 5 2.500-2.500L11.500 8 7 13z" stroke="#fff" stroke-width="1.600" /></g>
              <path v-if="v === 'dots'" d="M2 8h2M9 8h2M15 8h2" stroke="#555" stroke-width="2" />
            </svg>
          </div>
        </div>
        <div class="modes">
          <svg width="140" height="38" fill="none" stroke="#222" stroke-width="1.200">
            <path d="M22 8.500h16" /><path d="M22.500 11.500h19v15h-19zM22 16.500h20M22 21.500h20" stroke-dasharray="2 1" />
            <path d="M63.500 8.500h14v4h-14zM78 10.500h3v5H72v3M69.500 19.500h4v8h-4z" />
            <circle cx="110.500" cy="17" r="8.500" /><path d="M116.500 23l6 6M102.500 19l5-5 4 3 6-5M105.500 18v5M108.500 17v7M111.500 18v7M114.500 16v7" />
            <path d="M54 34.500h36" stroke="#f2c811" stroke-width="4" stroke-linecap="round" />
          </svg>
        </div>
        <div class="search vs"><svg width="17" height="17" fill="none" stroke="#444"><circle cx="10.500" cy="6" r="5" /><path d="M7 9.500l-6 6" /></svg><Tx t="ค้นหา" :w="31" /></div>
        <div class="plist">
          <div class="prow first"><svg class="cv" width="13" height="8" fill="none" stroke="#555"><path d="M1 1l5.500 5.500L12 1" /></svg><Tx t="ตัวควบคุมการเลือก" :w="92" :g="7" /></div>
          <div v-for="p in sections" :key="p.t" class="prow">
            <svg class="cv" width="13" height="8" fill="none" stroke="#555"><path :d="p.up ? 'M1 6.500L6.500 1 12 6.500' : 'M1 1l5.500 5.500L12 1'" /></svg>
            <Tx :t="p.t" :w="p.w" :g="7" />
            <div v-if="p.on" class="toggle"><Tx t="เปิด" :w="18" /><svg width="31" height="12"><path d="M0 6h24" stroke="#605e5c" stroke-width="2" /><circle cx="24" cy="6" r="6" fill="#605e5c" /></svg></div>
          </div>
          <div class="detail">
            <Tx t="สี" :w="7" />
            <div class="swatch"><i /><b /></div>
            <Tx t="โปร่งใส" :w="37" />
            <div class="num" />
          </div>
          <i class="pthumb" />
        </div>
      </aside>

      <aside class="fields">
        <div class="phead"><Tx t="เขตข้อมูล" :w="69" :s="15" :b="700" :g="12" /><svg class="pchev" width="9" height="14" fill="none" stroke="#444" stroke-width="1.200"><path d="M1 1.500l6 5.500-6 5.500" /></svg></div>
        <div class="search"><svg width="17" height="17" fill="none" stroke="#444"><circle cx="10.500" cy="6" r="5" /><path d="M7 9.500l-6 6" /></svg><Tx t="ค้นหา" :w="31" /></div>
        <div class="tree">
          <div class="root">
            <svg width="44" height="24" fill="none"><path d="M4 15l5.500-5.500L15 15" stroke="#444" /><path d="M23.500 6.500h12v11h-12zM23 10.500h13M23 14.500h13M27.500 9v9M31.500 9v9" stroke="#222" /><path d="M23 7.500h13" stroke="#222" stroke-width="3" /><circle cx="36" cy="19.500" r="6" fill="#f2c811" /><path d="M33.500 19.500l2 2 3-3.500" stroke="#333" stroke-width="1.200" /></svg>
            <Tx t="covid19_BI" :w="57" :g="4" />
          </div>
          <div v-for="f in fields" :key="f.t" class="field">
            <i class="box" :class="{ on: f.on }"><svg v-if="f.on" width="10" height="10" fill="none" stroke="#333"><path d="M2 5l2 2 4-4" /></svg></i>
            <svg width="11" height="11" fill="none" stroke="#222" stroke-width="1.300"><path v-if="!f.on" d="M9 3V1.500H1.500l4 4-4 4H9V8" /></svg>
            <Tx :t="f.t" :w="f.w" :g="9" />
          </div>
        </div>
      </aside>
    </main>

    <div class="status"><Tx t="หน้า 1 จาก 2" :w="56" :s="11.500" /></div>

    <footer class="task">
      <div class="start"><svg width="16" height="16" fill="#fff"><path d="M0 2.500l7-1v6H0zM8 1.300L16 0v7.500H8zM0 8.500h7v6l-7-1zM8 8.500h8V16l-8-1.200z" /></svg></div>
      <div class="tsearch"><svg width="18" height="20" fill="none" stroke="#222" stroke-width="1.400"><circle cx="11" cy="7" r="5.500" /><path d="M7.500 11.500L1 18.500" /></svg><Tx t="Type here to search" :w="127" :s="14.500" /></div>
      <div class="tapp view"><svg width="18" height="20" fill="none" stroke="#fff"><path d="M1 1v3h10V1M1 19v-3h10v3M1.500 7.500h9.500v5.500H1.500zM15 1v18" /><path d="M15 6v4" stroke-width="3" /></svg></div>
      <div class="tapp u"><svg width="24" height="26"><path d="M1 2h8l2 2h12v20H1z" fill="#ffd76a" /><path d="M1 2h9v3H1z" fill="#dc9b13" /><path d="M4 13h15v11h-4v-5H9v5H4z" fill="#3b9edc" /></svg></div>
      <div class="tapp u"><svg width="24" height="24"><circle cx="12" cy="12" r="11" fill="#ffd044" /><path d="M12 12L2.500 6.500A11 11 0 0 0 10 23l5-7z" fill="#2ba24c" /><path d="M12 12L2.500 6.500A11 11 0 0 1 22 7H12z" fill="#dd4b3e" /><circle cx="12" cy="12" r="5.500" fill="#fff" /><circle cx="12" cy="12" r="4.300" fill="#4688f1" /></svg></div>
      <div class="tapp"><svg width="22" height="24"><path d="M1 11C2 4 7 1 11.500 1 17 1 21 5 21 11v3H7.500c.3 3.500 3.500 5 6.500 5 2.500 0 4.500-.7 6-1.600v4.300c-2 1-4.500 1.500-7 1.500C7 23.200 3 19.500 3 14.500c0-4 2.500-7 6-8.500-1 1.200-1.500 2.500-1.600 4H15c0-3-1.500-4.500-4.500-4.500C6.500 5.500 3 7.500 1 11z" fill="#0b7bd6" /></svg></div>
      <div class="tapp pbi u"><svg width="24" height="24"><path d="M0 0h24v24H0z" fill="#f2c811" /><path d="M5 17H4V6h16v11h-1" fill="none" stroke="#222" stroke-width="1.300" /><path d="M8 15v4M11 12v7M14 13v6M17 9v10" stroke="#222" stroke-width="2" /></svg></div>
      <div class="tapp u"><svg width="26" height="24"><circle cx="15" cy="12" r="11" fill="#e55c3a" /><path d="M15 1a11 11 0 0 1 11 11H15z" fill="#ff9270" /><path d="M1 5h13v13H1z" fill="#c43e1c" /><text x="4" y="15.500" font-size="11" font-weight="700" fill="#fff">P</text></svg></div>
      <div class="tapp u"><svg width="24" height="20"><path d="M.5 1.500h22v17H.5z" fill="#454545" stroke="#aaa" /><path d="M2 3h19v2H2z" fill="#777" /><text x="3" y="9" font-size="5" fill="#ddd">C:\_</text></svg></div>
      <div class="tapp u"><svg width="26" height="24"><path d="M6 0h19v6H6z" fill="#41a5ee" /><path d="M6 6h19v6H6z" fill="#2b7cd3" /><path d="M6 12h19v6H6z" fill="#185abd" /><path d="M6 18h19v6H6z" fill="#103f91" /><path d="M0 5h13v14H0z" fill="#185abd" /><text x="1" y="16" font-size="11" font-weight="700" fill="#fff" textLength="11" lengthAdjust="spacingAndGlyphs">W</text></svg></div>
      <div class="tray">
        <svg width="90" height="22" fill="none" stroke="#fff" stroke-width="1.300">
          <path d="M1 13l5.500-5.500L12 13" />
          <g stroke="#aaa"><path d="M26 19C26 11 31 7 38 7M29.500 19c0-5 3-8 8.500-8M33 19c0-3 2-4.500 5-4.500" /></g><circle cx="36.500" cy="18" r="1.500" fill="#fff" stroke="none" />
          <path d="M51 6.500h10v9H50v-4M62 9v4" /><path d="M53 8.500h6v5h-6z" fill="#fff" /><path d="M47 4v3h4V4M49 7v4" />
          <path d="M72 8.500h3l4-4v13l-4-4h-3zM81 8c2 2 2 4 0 6M83.500 6c3 3 3 7 0 10M86 4c4 4 4 10 0 14" />
        </svg>
        <Tx t="ENG" :w="23" :s="12" :g="6" />
        <div class="clock"><Tx t="4:10" :w="21" :s="12" /><Tx t="19/3/63" :w="40" :s="12" /></div>
        <svg class="note" width="28" height="32" fill="none"><path d="M1 1h16v13H9l-4 3v-3H1z" fill="#fff" /><path d="M4 4.500h10M4 7.500h10M4 10.500h6" stroke="#222" /><circle cx="17" cy="20" r="8" fill="#292929" stroke="#999" /><text x="14" y="24" fill="#fff" font-size="11">5</text></svg>
        <i class="desk" />
      </div>
    </footer>
  </div>
</template>

<style>
body { margin: 0; overflow: hidden; }
</style>

<style scoped>
.app { width: 1366px; height: 768px; display: flex; flex-direction: column; background: #f3f2f1; color: #252423; font-family: "Open Sans", "Noto Sans", "Noto Sans Thai", "Liberation Sans", sans-serif; overflow: hidden; }
.app * { box-sizing: border-box; }
.app svg { flex: none; display: block; }
i { font-style: normal; display: block; }
.title { height: 35px; background: #3b3a37; color: #fff; display: flex; align-items: center; padding-top: 2px; flex: none; }
.avatar { width: 16px; height: 16px; border-radius: 50%; background: #f3f2f1; margin-left: 10px; }
.tabs { height: 37px; display: flex; flex: none; background: linear-gradient(90deg, #f5f5f4 65px, #f3f2f1 65px); }
.tab { display: flex; flex-direction: column; align-items: flex-end; padding-top: 10px; color: #3b3a39; height: 36px; }
.tab.gold { color: #b28e12; }
.tab .bar { width: 51px; height: 3px; background: #f2c811; margin-top: 5px; }
.ribbon { height: 92px; display: flex; flex: none; position: relative; background: #f3f2f1; }
.group { display: flex; flex-direction: column; position: relative; border-right: 1px solid #cfcdcb; height: 90px; margin-top: 2px; flex: none; padding-top: 2px; }
.clip { width: 156px; }
.btns { display: flex; height: 74px; }
.btn { display: flex; flex-direction: column; align-items: center; flex: none; color: #444; }
.line { height: 16px; display: flex; align-items: center; justify-content: center; flex: none; }
.drop { height: 16px; }
.glabel { display: flex; justify-content: center; color: #444; }
.clipbody { display: flex; height: 74px; }
.paste { width: 32px; margin-left: 15px; color: #a19f9d; }
.paste > svg:last-child { margin: 2px 0 0 5px !important; }
.cmds { margin: -2px 0 0 5px; }
.cmd { height: 24px; display: flex; align-items: center; color: #3b3a39; }
.collapse { position: absolute; right: 3px; bottom: 5px; }
.work { height: 543px; display: flex; flex: none; border-bottom: 1px solid #c8c6c4; }
.side { width: 41px; flex: none; border-right: 1px solid #dcdad8; position: relative; }
.mark { position: absolute; left: 0; top: 0; width: 3px; height: 40px; background: #f2c811; }
.center { width: 963px; flex: none; }
.top { height: 507px; display: flex; background: #fff; }
.canvas { width: 763px; flex: none; }
.report { display: flex; height: 431px; border-bottom: 2px dotted #666; overflow: hidden; }
.c1 { width: 186px; flex: none; } .c2 { width: 197px; flex: none; } .c3 { width: 380px; flex: none; }
.who { height: 83px; background: #a3d2ff; padding: 4px 0 0 3px; }
.select { height: 75px; background: #323232; color: #fff; display: flex; flex-direction: column; align-items: center; padding-top: 25px; }
.uline { width: 150px; height: 2px; background: #fff; margin-top: -6px; }
.slicer { height: 271px; background: #ff0ff8; position: relative; padding-left: 8px; }
.shead { height: 13px; padding-top: 2px; color: #642169; }
.rows { height: 257px; overflow: hidden; margin-top: -1px; }
.srow { height: 21.450px; display: flex; align-items: center; }
.srow:first-child .cell { clip-path: inset(1.500px 0 0 0); }
.cell { height: 19.500px; width: 163px; background: #ffff08; display: flex; align-items: center; color: #5b5a3c; padding: 0 0 2px; margin-left: 4px; }
.radio { width: 8px; height: 8px; border: 1.500px solid #d9b6d9; border-radius: 50%; flex: none; margin-top: -2px; }
.radio.on { background: #222; border-color: #444; }
.thumb { position: absolute; right: 2px; top: 120px; width: 5px; height: 89px; background: rgba(190, 190, 60, .6); }
.handles { position: absolute; left: 0; top: 0; }
.big { height: 83px; background: #0f69bf; color: #fff; display: flex; flex-direction: column; align-items: center; padding-top: 18px; }
.sub { color: #3b5878; margin-top: -5px; }
.chart { background: #000; }
.chart text { font-family: Roboto, "Noto Sans", "Noto Sans Thai", sans-serif; }
.tablebox { height: 83px; background: #0a4680; padding: 3px 0 0 3px; }
.grid { display: grid; grid-template-columns: 81px 101px 86px 101px; width: 369px; color: #252423; }
.col { display: flex; flex-direction: column; }
.th { height: 33px; background: #fff; border-right: 1px solid #7398bb; padding: 2px 0 0 3px; border-bottom: 1px solid #5c86ae; }
.td { height: 24px; background: #a3d2ff; border-right: 1px solid #7398bb; border-bottom: 1px solid #47759c; display: flex; align-items: center; padding: 2px 3px 0 2px; }
.col:nth-child(n+2) .td { justify-content: flex-end; background: #fff100; }
.col:nth-child(3) .td { background: #ff1500; color: #6a0c08; }
.col:nth-child(4) .td { background: #00ff38; color: #10581f; }
.sort { border: 5px solid transparent; border-top: 0; border-bottom: 5px solid #222; width: 0; margin-top: -1px; }
.mapbox { height: 346px; background: #4350ae; padding: 1px 2px; color: #262b56; }
.filters { width: 200px; height: 506px; border-left: 1px solid #9c9a98; flex: none; background: #fff; }
.fhead { height: 52px; display: flex; align-items: center; padding: 0 11px 6px 12px; }
.eye { margin-left: 54px; } .chev { margin-left: 18px; }
.search { height: 30px; border: 1px solid #b3b0ad; background: #fff; border-radius: 2px; display: flex; align-items: center; gap: 8px; padding-left: 10px; margin: 0 11px 0 8px; }
.flist { border-top: 1px solid #a6a4a2; margin-top: 4px; padding: 14px 12px 0 8px; color: #3b3a39; }
.fsec { height: 22px; display: flex; align-items: center; justify-content: space-between; padding-right: 3px; margin-bottom: 5px; }
.fsec span { font-size: 13px; letter-spacing: 1px; color: #666; padding-top: 3px; }
.fcard { height: 49px; border: 1px solid #c8c6c4; border-radius: 2px; padding: 4px 8px; margin-bottom: 6px; display: flex; flex-direction: column; gap: 4px; }
.drophere { height: 46px; border: 1px solid #c8c6c4; border-radius: 2px; display: flex; justify-content: center; align-items: center; margin-bottom: 24px; }
.pages { height: 35px; background: #e8e8e8; display: flex; }
.arrows { width: 39px; display: flex; align-items: center; justify-content: space-between; padding: 0 6px; }
.arrows i { border: 4px solid transparent; width: 0; }
.arrows .l { border-right: 5px solid #c0c0c0; border-left: 0; } .arrows .r { border-left: 5px solid #c0c0c0; border-right: 0; }
.page { width: 73px; display: flex; align-items: center; justify-content: center; color: #555; border-right: 1px solid #c8c6c4; }
.page.active { width: 71px; background: #fff; border-left: 1px solid #aaa; border-bottom: 3px solid #f2c811; color: #333; padding: 2px 0 0 2px; }
.add { width: 39px; background: #f2c811; display: flex; align-items: center; justify-content: center; }
.viz { width: 182px; border-left: 1px solid #dcdad8; border-right: 1px solid #dcdad8; flex: none; overflow: hidden; }
.phead { height: 52px; display: flex; align-items: center; color: #3b3a39; padding: 0 11px 5px 0; }
.pchev { margin-left: auto; }
.icons { height: 142px; display: grid; grid-template-columns: repeat(6, 28px); grid-auto-rows: 24px; padding: 0 0 0 4px; margin-top: -2px; }
.vi { width: 28px; height: 24px; display: flex; align-items: center; justify-content: center; }
.vi svg { overflow: visible; }
.vi.picked svg { outline: 2px solid #605e5c; outline-offset: 1px; background: #c8c6c4; }
.modes { height: 39px; border-top: 1px solid #d6d4d2; margin-top: 2px; }
.search.vs { margin: 1px 4px 0; }
.plist { position: relative; border-top: 1px solid #d6d4d2; margin-top: 4px; height: 274px; overflow: hidden; color: #3b3a39; }
.prow { height: 36px; border-bottom: 1px solid #dcdad8; display: flex; align-items: center; padding: 3px 0 0 6px; }
.prow.first { height: 22px; padding: 0 0 9px 6px; }
.toggle { display: flex; align-items: center; gap: 5px; margin-left: auto; padding-right: 26px; }
.detail { padding: 8px 0 0 17px; }
.swatch { width: 44px; height: 24px; background: #fff; border: 1px solid #c8c6c4; border-radius: 2px; display: flex; align-items: center; padding-left: 4px; gap: 9px; margin: 6px 0 20px; }
.swatch i { width: 13px; height: 13px; background: #f0f; border: 1px solid #333; }
.swatch b { border: 4px solid transparent; border-top: 4px solid #222; border-bottom: 0; }
.num { width: 50px; height: 24px; background: #fff; border: 1px solid #c8c6c4; border-radius: 2px; margin-top: 8px; }
.pthumb { position: absolute; right: 0; top: 28px; width: 6px; height: 146px; border-radius: 3px; background: #d0cecb; }
.fields { width: 180px; flex: none; }
.fields .search { width: 172px; margin: 0 4px; }
.tree { border-top: 1px solid #d6d4d2; margin-top: 4px; padding-top: 10px; }
.root { display: flex; align-items: center; height: 24px; margin-bottom: 6px; }
.root > svg:first-child { overflow: visible; }
.field { height: 24px; display: flex; align-items: center; padding-left: 32px; }
.box { width: 12px; height: 12px; border: 1px solid #706e6b; border-radius: 2px; margin-right: 5px; flex: none; }
.box.on { background: #f2c811; border-color: #f2c811; }
.status { height: 21px; flex: none; padding: 3px 0 0 5px; color: #444; }
.task { height: 40px; flex: none; background: linear-gradient(90deg, #1f1f1f 820px, #32292b 910px, #32292b 950px, #1f1f1f 1030px); color: #fff; display: flex; }
.start { width: 48px; display: flex; align-items: center; justify-content: center; }
.tsearch { width: 344px; background: #f2f2f2; border: 1px solid #bbb; color: #333; display: flex; align-items: center; gap: 11px; padding-left: 10px; }
.tapp { width: 40px; display: flex; align-items: center; justify-content: center; margin-left: 9px; }
.tapp.view { width: 47px; margin-left: 0; }
.tapp.view + .tapp { margin-left: 8px; }
.tapp.u { border-bottom: 2px solid #aaa; }
.tapp.pbi { width: 48px; background: #4b4b4b; margin-left: 5px; }
.tapp.pbi + .tapp { margin-left: 5px; }
.tray { margin-left: auto; display: flex; align-items: center; }
.clock { width: 40px; margin-left: 12px; display: flex; flex-direction: column; align-items: center; gap: 2px; }
.note { margin-left: 18px; margin-top: 6px; }
.desk { width: 1px; height: 40px; background: #777; margin: 0 4px 0 8px; }
</style>
